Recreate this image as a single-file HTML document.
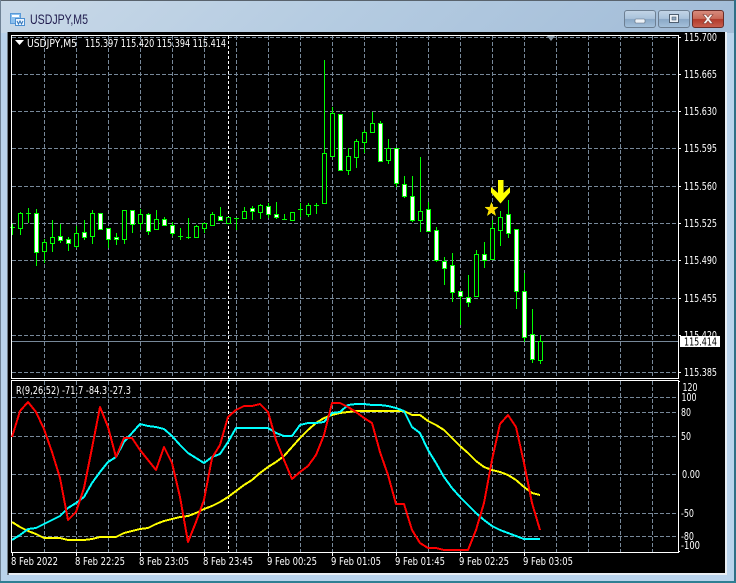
<!DOCTYPE html>
<html><head><meta charset="utf-8"><title>USDJPY,M5</title>
<style>
html,body{margin:0;padding:0;background:#fff;width:736px;height:583px;overflow:hidden}
svg{display:block}
text{font-family:"DejaVu Sans","Liberation Sans",sans-serif;font-size:10.5px;fill:#fff}
</style></head><body>
<svg width="736" height="583" viewBox="0 0 736 583" xmlns="http://www.w3.org/2000/svg">
<defs>
<linearGradient id="tb" x1="0" y1="0" x2="1" y2="0.05"><stop offset="0" stop-color="#c9d9e8"/><stop offset="0.5" stop-color="#b4cbe1"/><stop offset="1" stop-color="#a3bdd8"/></linearGradient>
<linearGradient id="btn" x1="0" y1="0" x2="0" y2="1"><stop offset="0" stop-color="#c3d5e7"/><stop offset="0.48" stop-color="#a9c2db"/><stop offset="0.52" stop-color="#8aa8c6"/><stop offset="1" stop-color="#a6c2dc"/></linearGradient>
<linearGradient id="cls" x1="0" y1="0" x2="0" y2="1"><stop offset="0" stop-color="#d88d7f"/><stop offset="0.48" stop-color="#c96a58"/><stop offset="0.52" stop-color="#b23a2a"/><stop offset="1" stop-color="#c8604f"/></linearGradient>
</defs>
<!-- window frame -->
<rect x="0" y="0" width="736" height="583" fill="#b9d3ec"/>
<rect x="0" y="0" width="736" height="33" fill="url(#tb)"/>
<rect x="0" y="0" width="736" height="1" fill="#59636d"/>
<rect x="0" y="0" width="1" height="583" fill="#6f8295"/>
<rect x="734" y="0" width="2" height="583" fill="#2f6f86"/>
<rect x="0" y="581" width="736" height="2" fill="#2f7f93"/>
<rect x="7" y="32" width="720" height="543" fill="#e8eef4"/>
<rect x="7" y="32" width="2" height="543" fill="#6f7b86"/>
<rect x="8" y="32" width="717" height="541" fill="#000"/>

<!-- title icon -->
<rect x="10.500" y="13.500" width="10" height="10" fill="#8cc0ee" stroke="#5a9ad8"/>
<rect x="12" y="15" width="7" height="2" fill="#fff"/>
<rect x="15.500" y="18.500" width="9" height="7" fill="#eaf4ff" stroke="#4a8ed0"/>
<path d="M17 21l1.500 3 1.500-3 1.500 3 1.500-3" fill="none" stroke="#2f74b8"/>
<text x="30" y="24" textLength="58" lengthAdjust="spacingAndGlyphs" style="font-family:'Liberation Sans',sans-serif;font-size:13.500px;fill:#1f1b4d">USDJPY,M5</text>

<!-- buttons -->
<rect x="624.500" y="10.500" width="31" height="17" rx="2.500" fill="url(#btn)" stroke="#6d7f92"/>
<rect x="635" y="19" width="10" height="4" rx="1" fill="#eef3f8" stroke="#5a6b7c" stroke-width=".6"/>
<rect x="658.500" y="10.500" width="31" height="17" rx="2.500" fill="url(#btn)" stroke="#6d7f92"/>
<rect x="669.500" y="14.500" width="9" height="8" fill="#eef3f8" stroke="#4f5f70"/>
<rect x="672" y="17" width="4" height="3" fill="#8fa8c0" stroke="#4f5f70" stroke-width=".6"/>
<rect x="692.500" y="10.500" width="31" height="17" rx="2.500" fill="url(#cls)" stroke="#6b2d28"/>
<path d="M703 14.500l3 0 2 2.500 2-2.500 3 0-3.500 4.500 3.500 4.500-3 0-2-2.500-2 2.500-3 0 3.500-4.500z" fill="#f6f2f0" stroke="#7a3a33" stroke-width=".6"/>

<!-- grid -->
<path shape-rendering="crispEdges" fill="none" stroke="#778899" stroke-dasharray="4 2" d="M12 37.500H678M12 74.500H678M12 111.500H678M12 148.500H678M12 186.500H678M12 223.500H678M12 260.500H678M12 298.500H678M12 335.500H678M12 372.500H678
M12 397.500H678M12 412.500H678M12 436.500H678M12 474.500H678M12 513.500H678M12 536.500H678
M44.500 36V378M76.500 36V378M108.500 36V378M140.500 36V378M172.500 36V378M204.500 36V378M236.500 36V378M268.500 36V378M300.500 36V378M332.500 36V378M364.500 36V378M396.500 36V378M428.500 36V378M460.500 36V378M492.500 36V378M524.500 36V378M556.500 36V378M588.500 36V378M620.500 36V378M652.500 36V378
M44.500 381V552M76.500 381V552M108.500 381V552M140.500 381V552M172.500 381V552M204.500 381V552M236.500 381V552M268.500 381V552M300.500 381V552M332.500 381V552M364.500 381V552M396.500 381V552M428.500 381V552M460.500 381V552M492.500 381V552M524.500 381V552M556.500 381V552M588.500 381V552M620.500 381V552M652.500 381V552"/>
<path shape-rendering="crispEdges" fill="none" stroke="#fff" stroke-dasharray="3 2" d="M228.500 36V378M228.500 381V552"/>
<path shape-rendering="crispEdges" stroke="#778899" d="M12 341.500H678"/>

<!-- wicks -->
<path shape-rendering="crispEdges" fill="none" stroke="#00ff00" d="M12.500 224V235M20.500 212V235M28.500 208V223M36.500 209V266M44.500 239V263M52.500 220V252M60.500 224V243M68.500 237V251M76.500 226V248M84.500 220V240M92.500 210V244M100.500 213V230M108.500 228V248M116.500 233V245M124.500 210V244M132.500 210V233M140.500 209V230M148.500 213V235M156.500 210V230M164.500 217V226M172.500 222V236M180.500 228V240M188.500 218V239M196.500 225V237M204.500 223V233M212.500 212V225M220.500 207V221M228.500 217V223M236.500 218V230M244.500 207V219M252.500 206V220M260.500 204V219M268.500 203V218M276.500 202V219M284.500 214V220M292.500 212V221M300.500 203V217M308.500 203V217M316.500 203V214M324.500 60V203M332.500 107V157M340.500 114V170M348.500 148V175M356.500 139V168M364.500 130V153M372.500 112V133M380.500 121V162M388.500 139V164M396.500 148V187M404.500 176V198M412.500 176V222M420.500 157V232M428.500 202V231M436.500 227V262M444.500 257V285M452.500 253V302M460.500 291V325M468.500 275V307M476.500 250V296M484.500 242V268M492.500 220V259M500.500 211V246M508.500 200V238M516.500 229V309M524.500 273V342M532.500 309V363M540.500 335V364
M10 227.500H15M26 213.500H31M186 237.500H191M234 218.500H239M282 219.500H287M298 209.500H303M314 205.500H319M178 236.500H183"/>

<!-- black-body candles -->
<g shape-rendering="crispEdges" fill="#000" stroke="#00ff00">
<rect x="18.500" y="213.500" width="4" height="15"/><rect x="42.500" y="242.500" width="4" height="9"/><rect x="50.500" y="237.500" width="4" height="6"/><rect x="74.500" y="233.500" width="4" height="13"/><rect x="90.500" y="213.500" width="4" height="23"/><rect x="122.500" y="210.500" width="4" height="29"/><rect x="138.500" y="214.500" width="4" height="9"/><rect x="154.500" y="219.500" width="4" height="10"/><rect x="194.500" y="226.500" width="4" height="11"/><rect x="202.500" y="223.500" width="4" height="5"/><rect x="210.500" y="214.500" width="4" height="11"/><rect x="226.500" y="217.500" width="4" height="6"/><rect x="242.500" y="211.500" width="4" height="7"/><rect x="258.500" y="205.500" width="4" height="7"/><rect x="290.500" y="212.500" width="4" height="8"/><rect x="306.500" y="205.500" width="4" height="9"/><rect x="322.500" y="153.500" width="4" height="50"/><rect x="330.500" y="113.500" width="4" height="43"/><rect x="346.500" y="156.500" width="4" height="14"/><rect x="354.500" y="141.500" width="4" height="16"/><rect x="362.500" y="132.500" width="4" height="10"/><rect x="370.500" y="123.500" width="4" height="9"/><rect x="386.500" y="148.500" width="4" height="12"/><rect x="418.500" y="211.500" width="4" height="9"/><rect x="474.500" y="254.500" width="4" height="42"/><rect x="490.500" y="228.500" width="4" height="31"/><rect x="498.500" y="217.500" width="4" height="13"/><rect x="538.500" y="341.500" width="4" height="19"/>
</g>
<!-- white-body candles -->
<g shape-rendering="crispEdges" fill="#fff" stroke="#00ff00">
<rect x="34.500" y="213.500" width="4" height="39"/><rect x="58.500" y="236.500" width="4" height="4"/><rect x="66.500" y="239.500" width="4" height="4"/><rect x="82.500" y="232.500" width="4" height="5"/><rect x="98.500" y="213.500" width="4" height="16"/><rect x="106.500" y="228.500" width="4" height="11"/><rect x="114.500" y="237.500" width="4" height="2"/><rect x="130.500" y="210.500" width="4" height="14"/><rect x="146.500" y="214.500" width="4" height="17"/><rect x="162.500" y="219.500" width="4" height="6"/><rect x="170.500" y="225.500" width="4" height="8"/><rect x="218.500" y="216.500" width="4" height="4"/><rect x="250.500" y="208.500" width="4" height="3"/><rect x="266.500" y="206.500" width="4" height="8"/><rect x="274.500" y="214.500" width="4" height="3"/><rect x="338.500" y="114.500" width="4" height="56"/><rect x="378.500" y="123.500" width="4" height="38"/><rect x="394.500" y="148.500" width="4" height="35"/><rect x="402.500" y="184.500" width="4" height="12"/><rect x="410.500" y="196.500" width="4" height="24"/><rect x="426.500" y="209.500" width="4" height="22"/><rect x="434.500" y="230.500" width="4" height="30"/><rect x="442.500" y="261.500" width="4" height="7"/><rect x="450.500" y="265.500" width="4" height="27"/><rect x="458.500" y="291.500" width="4" height="5"/><rect x="466.500" y="297.500" width="4" height="5"/><rect x="482.500" y="254.500" width="4" height="6"/><rect x="506.500" y="214.500" width="4" height="19"/><rect x="514.500" y="229.500" width="4" height="62"/><rect x="522.500" y="291.500" width="4" height="46"/><rect x="530.500" y="334.500" width="4" height="25"/>
</g>

<!-- arrow and star -->
<path fill="#ffff00" d="M498 180H503.500V193L510 187V192.500L500.500 203.500L491 192.500V187L498 193Z"/>
<path fill="#ffd700" stroke="#ffff00" stroke-width=".5" d="M491.500 202.500L493.200 207.200H498L494.200 210.200L495.600 215.500L491.500 212.500L487.400 215.500L488.800 210.200L485 207.200H489.800Z"/>

<!-- borders -->
<path shape-rendering="crispEdges" fill="none" stroke="#fff" d="M11.500 35.500H678.500V378.500H11.500ZM11.500 380.500H678.500V552.500H11.500Z"/>
<path shape-rendering="crispEdges" fill="none" stroke="#fff" d="M678 37.500H681M678 74.500H681M678 111.500H681M678 148.500H681M678 186.500H681M678 223.500H681M678 260.500H681M678 298.500H681M678 335.500H681M678 372.500H681M678 381.500H680M678 551.500H680M12.500 552V556M76.500 552V556M140.500 552V556M204.500 552V556M268.500 552V556M332.500 552V556M396.500 552V556M460.500 552V556M524.500 552V556"/>
<path fill="#8a9aa8" d="M547 36H555L551 41Z"/>
<path fill="#fff" d="M15 40H24L19.500 45Z"/>

<!-- indicator lines -->
<g fill="none" stroke-width="2" shape-rendering="crispEdges" stroke-linejoin="round">
<polyline stroke="#ffff00" points="12,522 20,527 28,531 36,534 44,538 52,538 60,538 68,540 76,540 84,540 92,539 100,537 108,537 116,537 124,533 132,531 140,529 148,528 156,524 164,521 172,519 180,517 188,516 196,513 204,509 212,506 220,502 228,497 236,491 244,485 252,480 260,473 268,467 276,462 284,456 292,447 300,438 308,430 316,423 324,418 332,415 340,413 348,412 356,411 404,411 412,415 420,415 428,421 436,425 444,430 452,438 460,446 468,453 476,461 484,467 492,470 500,472 508,475 516,480 524,487 532,493 540,495"/>
<polyline stroke="#00ffff" points="12,540 20,535 28,529 36,528 44,524 52,520 60,516 68,508 76,503 84,497 92,483 100,472 108,462 116,457 124,442 132,433 140,424 148,426 156,427 164,429 172,436 180,445 188,453 196,458 204,463 212,457 220,454 228,442 236,428 244,428 252,428 260,428 268,428 276,433 284,436 292,436 300,425 308,423 316,423 324,422 332,413 340,412 348,405 356,404 364,404 372,405 380,405 388,406 396,408 404,411 412,427 420,433 428,450 436,463 444,477 452,488 460,497 468,505 476,513 484,520 492,526 500,530 508,533 516,536 524,539 532,539 540,539"/>
<polyline stroke="#ff0000" points="12,437 20,411 28,402 36,412 44,429 52,452 60,478 68,520 76,512 84,488 92,448 100,407 108,427 116,457 124,438 132,438 140,450 148,460 156,470 164,447 172,463 180,497 188,542 196,522 204,500 212,458 220,445 228,417 236,410 244,406 252,406 260,404 268,412 276,440 284,460 292,479 300,472 308,466 316,455 324,435 332,403 340,403 348,407 356,412 364,418 372,423 380,452 388,475 396,504 404,504 412,530 420,543 428,548 436,548 444,550 452,550 460,550 468,550 476,530 484,503 492,460 500,424 508,415 516,427 524,463 532,503 540,530"/>
</g>

<!-- header texts -->
<text x="27" y="47" textLength="50" lengthAdjust="spacingAndGlyphs">USDJPY,M5</text>
<text x="85" y="47" textLength="141" lengthAdjust="spacingAndGlyphs">115.397 115.420 115.394 115.414</text>
<text x="16" y="394" textLength="115" lengthAdjust="spacingAndGlyphs">R(9,26,52) -71.7 -84.3 -27.3</text>

<!-- price axis -->
<g>
<text x="684" y="41" textLength="33" lengthAdjust="spacingAndGlyphs">115.700</text>
<text x="684" y="78" textLength="33" lengthAdjust="spacingAndGlyphs">115.665</text>
<text x="684" y="115" textLength="33" lengthAdjust="spacingAndGlyphs">115.630</text>
<text x="684" y="152" textLength="33" lengthAdjust="spacingAndGlyphs">115.595</text>
<text x="684" y="190" textLength="33" lengthAdjust="spacingAndGlyphs">115.560</text>
<text x="684" y="227" textLength="33" lengthAdjust="spacingAndGlyphs">115.525</text>
<text x="684" y="264" textLength="33" lengthAdjust="spacingAndGlyphs">115.490</text>
<text x="684" y="302" textLength="33" lengthAdjust="spacingAndGlyphs">115.455</text>
<text x="684" y="339" textLength="33" lengthAdjust="spacingAndGlyphs">115.420</text>
<text x="684" y="376" textLength="33" lengthAdjust="spacingAndGlyphs">115.385</text>
<rect x="680" y="336" width="40" height="11" fill="#fff"/>
<text x="684" y="345.500" textLength="33" lengthAdjust="spacingAndGlyphs" style="fill:#000">115.414</text>
<text x="682.500" y="391" textLength="15" lengthAdjust="spacingAndGlyphs">120</text>
<text x="681.500" y="401" textLength="15" lengthAdjust="spacingAndGlyphs">100</text>
<text x="681" y="416" textLength="10" lengthAdjust="spacingAndGlyphs">80</text>
<text x="681" y="440" textLength="10" lengthAdjust="spacingAndGlyphs">50</text>
<text x="682" y="478" textLength="18" lengthAdjust="spacingAndGlyphs">0.00</text>
<text x="681" y="517" textLength="13" lengthAdjust="spacingAndGlyphs">-50</text>
<text x="681" y="540" textLength="13" lengthAdjust="spacingAndGlyphs">-80</text>
<text x="681" y="549" textLength="19" lengthAdjust="spacingAndGlyphs">-100</text>
</g>

<!-- time axis -->
<g>
<text x="11" y="565" textLength="47" lengthAdjust="spacingAndGlyphs">8 Feb 2022</text>
<text x="75" y="565" textLength="50" lengthAdjust="spacingAndGlyphs">8 Feb 22:25</text>
<text x="139" y="565" textLength="50" lengthAdjust="spacingAndGlyphs">8 Feb 23:05</text>
<text x="203" y="565" textLength="50" lengthAdjust="spacingAndGlyphs">8 Feb 23:45</text>
<text x="267" y="565" textLength="50" lengthAdjust="spacingAndGlyphs">9 Feb 00:25</text>
<text x="331" y="565" textLength="50" lengthAdjust="spacingAndGlyphs">9 Feb 01:05</text>
<text x="395" y="565" textLength="50" lengthAdjust="spacingAndGlyphs">9 Feb 01:45</text>
<text x="459" y="565" textLength="50" lengthAdjust="spacingAndGlyphs">9 Feb 02:25</text>
<text x="523" y="565" textLength="50" lengthAdjust="spacingAndGlyphs">9 Feb 03:05</text>
</g>
</svg>
</body></html>
